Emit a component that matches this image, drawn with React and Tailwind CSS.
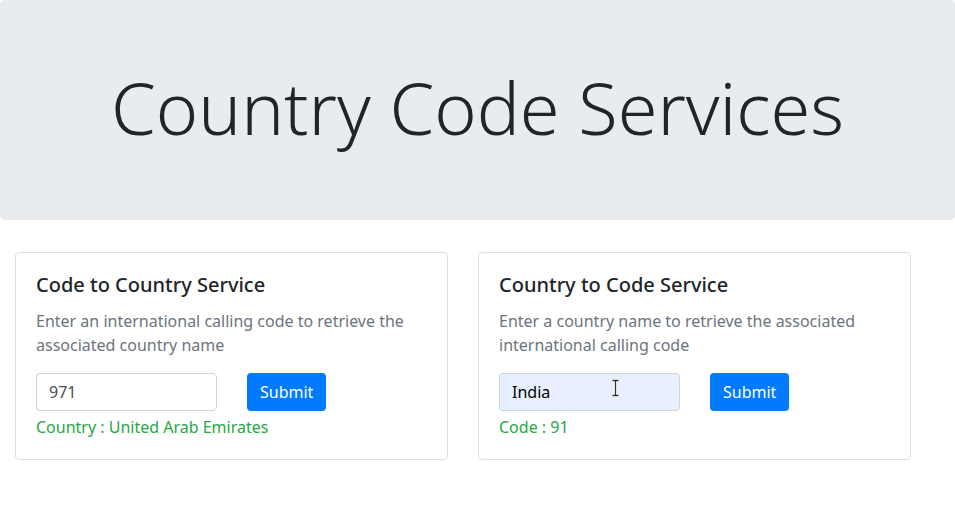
import React from "react";

function Card({ title, desc, value, autofill, result, cursor }) {
  return (
    <div className="w-[433px] border border-[#dfdfdf] rounded-[4px] p-5 bg-white">
      <h5 className="text-[20px] leading-[24px] font-medium text-[#212529] mb-3">{title}</h5>
      <p className="text-[16px] leading-[24px] text-[#6c757d] mb-4">{desc}</p>
      <div className="flex items-center gap-[30px]">
        <div className="relative">
          <input
            readOnly
            value={value}
            className={`w-[181px] h-[38px] border border-[#ced4da] rounded-[4px] px-3 text-[16px] text-[#495057] outline-none ${autofill ? "bg-[#e8f0fe] text-black" : "bg-white"}`}
            style={{ fontFamily: "'Noto Sans', sans-serif" }}
          />
          {cursor && (
            <svg className="absolute left-[113px] top-[6px]" width="7" height="18" viewBox="0 0 7 18">
              <path d="M0.5 1.5 H6.5 M3.5 1.5 V16.5 M0.5 16.5 H6.5" stroke="#ffffff" strokeWidth="3" fill="none" />
              <path d="M0.5 1.5 H6.5 M3.5 1.5 V16.5 M0.5 16.5 H6.5" stroke="#333333" strokeWidth="1.3" fill="none" />
            </svg>
          )}
        </div>
        <button className="h-[38px] px-[13px] rounded-[4px] bg-[#007bff] text-white text-[16px]">Submit</button>
      </div>
      <div className="mt-1 text-[16px] leading-[24px] text-[#28a745]">{result}</div>
    </div>
  );
}

export default function App() {
  return (
    <div className="min-h-[507px] bg-white" style={{ fontFamily: "'Noto Sans', sans-serif" }}>
      <div className="bg-[#e9ecef] rounded-[5px] pt-16 pb-[62px] mb-8">
        <h1 className="text-center text-[72px] leading-[86.4px] font-light text-[#212529] mb-2">Country Code Services</h1>
      </div>
      <div className="flex gap-[30px] pl-[15px]">
        <Card
          title="Code to Country Service"
          desc="Enter an international calling code to retrieve the associated country name"
          value="971"
          result="Country : United Arab Emirates"
        />
        <Card
          title="Country to Code Service"
          desc="Enter a country name to retrieve the associated international calling code"
          value="India"
          autofill
          cursor
          result="Code : 91"
        />
      </div>
    </div>
  );
}
